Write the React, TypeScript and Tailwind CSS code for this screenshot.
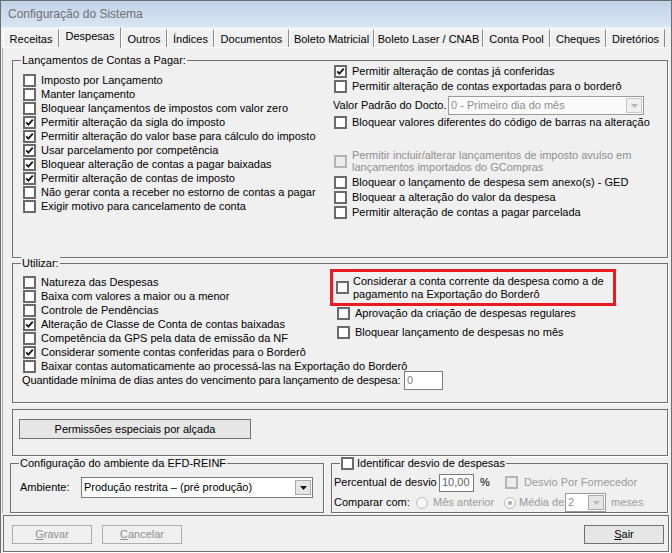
import type { ReactNode } from 'react';

type Item = [string, boolean];

const tabs = [
  { label: 'Receitas', w: 'w-[56px]' },
  { label: 'Despesas', w: 'w-[62px]', active: true },
  { label: 'Outros', w: 'w-[46px]' },
  { label: 'Índices', w: 'w-[47px]' },
  { label: 'Documentos', w: 'w-[75px]' },
  { label: 'Boleto Matricial', w: 'w-[85px]' },
  { label: 'Boleto Laser / CNAB', w: 'w-[109px]' },
  { label: 'Conta Pool', w: 'w-[67px]' },
  { label: 'Cheques', w: 'w-[56px]' },
  { label: 'Diretórios', w: 'w-[59px]' },
];

const lancLeft: Item[] = [
  ['Imposto por Lançamento', false],
  ['Manter lançamento', false],
  ['Bloquear lançamentos de impostos com valor zero', false],
  ['Permitir alteração da sigla do imposto', true],
  ['Permitir alteração do valor base para cálculo do imposto', true],
  ['Usar parcelamento por competência', true],
  ['Bloquear alteração de contas a pagar baixadas', true],
  ['Permitir alteração de contas de imposto', true],
  ['Não gerar conta a receber no estorno de contas a pagar', false],
  ['Exigir motivo para cancelamento de conta', false],
];

const utilLeft: Item[] = [
  ['Natureza das Despesas', false],
  ['Baixa com valores a maior ou a menor', false],
  ['Controle de Pendências', false],
  ['Alteração de Classe de Conta de contas baixadas', true],
  ['Competência da GPS pela data de emissão da NF', false],
  ['Considerar somente contas conferidas para o Borderô', true],
];

function Check({ checked = false, disabled = false }: { checked?: boolean; disabled?: boolean }) {
  return (
    <span
      className={`flex h-[13px] w-[13px] shrink-0 items-center justify-center border-2 ${
        disabled ? 'border-[#b4b4b4] bg-[#ececec]' : 'border-[#6a6a6a] bg-white'
      }`}
    >
      {checked && (
        <svg width="9" height="9" viewBox="0 0 9 9">
          <path d="M1.2 4.4 L3.4 6.7 L7.8 1.6" fill="none" stroke="#1a1a1a" strokeWidth="1.9" />
        </svg>
      )}
    </span>
  );
}

function Radio({ selected = false }: { selected?: boolean }) {
  return (
    <span className="flex h-[12px] w-[12px] shrink-0 items-center justify-center rounded-full border border-[#bdbdbd] bg-[#f6f6f6]">
      {selected && <span className="h-[4px] w-[4px] rounded-full bg-[#a8a8a8]" />}
    </span>
  );
}

function Row({ label, checked = false, disabled = false, className = '' }: { label: string; checked?: boolean; disabled?: boolean; className?: string }) {
  return (
    <div className={`flex h-[14px] items-center gap-[5px] whitespace-nowrap ${className}`}>
      <Check checked={checked} disabled={disabled} />
      <span className={disabled ? 'text-[#8f8f8f]' : ''}>{label}</span>
    </div>
  );
}

function Arrow({ disabled = false }: { disabled?: boolean }) {
  return (
    <span className="flex h-[15px] w-[16px] shrink-0 items-center justify-center border border-[#a9a9a9] bg-[#e6e6e6]">
      <svg width="7" height="4" viewBox="0 0 7 4">
        <path d="M0 0 H7 L3.5 4 Z" fill={disabled ? '#b8b8b8' : '#111'} />
      </svg>
    </span>
  );
}

function Group({ title, className = '', children }: { title?: ReactNode; className?: string; children?: ReactNode }) {
  return (
    <div className={`relative border border-[#707070] shadow-[1px_1px_0_#fff] ${className}`}>
      {title && (
        <div className="absolute -top-[7px] left-[8px] flex h-[13px] items-center bg-[#f0f0f0] px-px">{title}</div>
      )}
      {children}
    </div>
  );
}

function Btn({ children, disabled = false, className = '' }: { children: ReactNode; disabled?: boolean; className?: string }) {
  return (
    <div
      className={`flex h-[19px] items-center justify-center border ${
        disabled ? 'border-[#adadad] bg-[#f0f0f0] text-[#8d8d8d]' : 'border-[#707070] bg-[#e6e6e6]'
      } ${className}`}
    >
      {children}
    </div>
  );
}

export default function App() {
  return (
    <div className="h-[553px] w-[672px] overflow-hidden border-x border-t border-[#6e6e6e] bg-[#f0f0f0] font-['Liberation_Sans',Arial,sans-serif] text-[11px] leading-[13px] text-black">
      {/* title bar */}
      <div className="flex h-[26px] items-center bg-linear-to-b from-[#c2d3e9] to-[#d9e5f2] pl-[7px] text-[12px] text-[#707070]">
        Configuração do Sistema
      </div>

      {/* tabs */}
      <div className="flex h-[20px] items-end pl-[2px]">
        {tabs.map((t) => (
          <div
            key={t.label}
            className={`flex shrink-0 items-center justify-center whitespace-nowrap border-l border-t border-r border-l-white border-t-white border-r-[#8c8c8c] ${t.w} ${
              t.active ? 'relative z-10 -mb-px h-[21px] bg-[#f0f0f0] pb-[3px]' : 'h-[18px] pt-px'
            }`}
          >
            {t.label}
          </div>
        ))}
      </div>

      {/* tab page */}
      <div className="mx-px border-l border-t border-l-[#a8a8a8] border-t-white pl-[9px] pr-[2px] pt-[12px]">
        <Group title="Lançamentos de Contas a Pagar:" className="h-[198px]">
          <div className="flex">
            <div className="w-[320px] shrink-0 pl-[10px] pt-[12px]">
              {lancLeft.map(([l, c]) => (
                <Row key={l} label={l} checked={c} />
              ))}
            </div>
            <div className="pl-px pt-[3px]">
              <Row label="Permitir alteração de contas já conferidas" checked />
              <Row label="Permitir alteração de contas exportadas para o borderô" className="mt-px" />
              <div className="mt-[3px] flex h-[19px] items-center">
                <span className="-ml-px w-[115px] whitespace-nowrap">Valor Padrão do Docto.</span>
                <div className="flex h-[19px] w-[196px] items-center justify-between border border-[#9a9a9a] bg-[#fafafa] pl-[2px] pr-px text-[#8d8d8d]">
                  <span>0 - Primeiro dia do mês</span>
                  <span className="flex h-[15px] w-[16px] items-center justify-center border border-[#c8c8c8] bg-[#f0f0f0]">
                    <svg width="7" height="4" viewBox="0 0 7 4">
                      <path d="M0 0 H7 L3.5 4 Z" fill="#b8b8b8" />
                    </svg>
                  </span>
                </div>
              </div>
              <Row label="Bloquear valores diferentes do código de barras na alteração" />
              <div className="mt-[20px] flex h-[24px] items-center gap-[5px]">
                <Check disabled />
                <span className="leading-[12px] text-[#8f8f8f]">
                  Permitir incluir/alterar lançamentos de imposto avulso em
                  <br />
                  lançamentos importados do GCompras
                </span>
              </div>
              <Row label="Bloquear o lançamento de despesa sem anexo(s) - GED" className="mt-[2px] h-[15px]" />
              <Row label="Bloquear a alteração do valor da despesa" className="h-[15px]" />
              <Row label="Permitir alteração de contas a pagar parcelada" className="h-[15px]" />
            </div>
          </div>
        </Group>

        <Group title="Utilizar:" className="mt-[5px] h-[140px]">
          <div className="flex">
            <div className="w-[317px] shrink-0 pl-[10px] pt-[11px]">
              {utilLeft.map(([l, c]) => (
                <Row key={l} label={l} checked={c} />
              ))}
            </div>
            <div className="pt-[5px]">
              <div className="flex h-[37px] w-[286px] items-center gap-[4px] border-[3px] border-[#ea1a22] pl-[3px]">
                <Check />
                <span className="leading-[13px]">
                  Considerar a conta corrente da despesa como a de
                  <br />
                  pagamento na Exportação do Borderô
                </span>
              </div>
              <Row label="Aprovação da criação de despesas regulares" className="pl-[7px]" />
              <Row label="Bloquear lançamento de despesas no mês" className="mt-[5px] pl-[7px]" />
            </div>
          </div>
          <Row label="Baixar contas automaticamente ao processá-las na Exportação do Borderô" className="pl-[10px]" />
          <div className="-mt-[2px] flex h-[19px] items-center pl-[9px]">
            <span className="w-[382px] overflow-visible whitespace-nowrap tracking-[-0.12px]">
              Quantidade mínima de dias antes do vencimento para lançamento de despesa:
            </span>
            <div className="flex h-[19px] w-[39px] items-center border border-[#7a7a7a] bg-white pl-[2px] text-[#808080]">0</div>
          </div>
        </Group>

        <Group className="mt-[6px] h-[47px] pl-[6px] pt-[9px]">
          <Btn className="h-[20px] w-[232px]">Permissões especiais por alçada</Btn>
        </Group>

        <div className="mt-[7px] flex">
          <Group title="Configuração do ambiente da EFD-REINF" className="-ml-[2px] h-[50px] w-[314px]">
            <div className="flex items-center pl-[9px] pt-[13px]">
              <span className="w-[61px]">Ambiente:</span>
              <div className="flex h-[21px] w-[232px] items-center justify-between border border-[#7a7a7a] bg-white pl-[2px] pr-px">
                <span>Produção restrita – (pré produção)</span>
                <Arrow />
              </div>
            </div>
          </Group>

          <Group
            title={
              <span className="flex items-center gap-[3px]">
                <Check />
                <span>Identificar desvio de despesas</span>
              </span>
            }
            className="ml-[7px] h-[50px] flex-1"
          >
            <div className="pl-[2px] pt-[9px]">
              <div className="flex h-[19px] items-center">
                <span className="w-[105px] whitespace-nowrap">Percentual de desvio</span>
                <div className="flex h-[18px] w-[35px] items-center border border-[#7a7a7a] bg-white pl-[2px] text-[#5a6270]">10,00</div>
                <span className="ml-[6px] w-[25px]">%</span>
                <Check disabled />
                <span className="ml-[6px] text-[#9a9a9a]">Desvio Por Fornecedor</span>
              </div>
              <div className="mt-px flex h-[19px] items-center">
                <span className="w-[82px] whitespace-nowrap">Comparar com:</span>
                <Radio />
                <span className="ml-[5px] w-[71px] text-[#9a9a9a]">Mês anterior</span>
                <Radio selected />
                <span className="ml-[3px] w-[46px] text-[#9a9a9a]">Média de</span>
                <div className="flex h-[19px] w-[41px] items-center justify-between border border-[#9a9a9a] bg-white pl-[2px] pr-px text-[#8d8d8d]">
                  <span>2</span>
                  <Arrow disabled />
                </div>
                <span className="ml-[5px] text-[#9a9a9a]">meses</span>
              </div>
            </div>
          </Group>
        </div>
      </div>

      {/* button bar */}
      <div className="mx-[2px] mt-[2px] flex h-[37px] items-start justify-between border border-[#707070] pl-[8px] pr-[4px] pt-[9px] shadow-[1px_1px_0_#fff]">
        <div className="flex gap-[10px]">
          <Btn disabled className="w-[80px]">
            <span>
              <u>G</u>ravar
            </span>
          </Btn>
          <Btn disabled className="w-[80px]">
            <span>
              <u>C</u>ancelar
            </span>
          </Btn>
        </div>
        <Btn className="w-[80px]">
          <span>
            <u>S</u>air
          </span>
        </Btn>
      </div>
    </div>
  );
}
